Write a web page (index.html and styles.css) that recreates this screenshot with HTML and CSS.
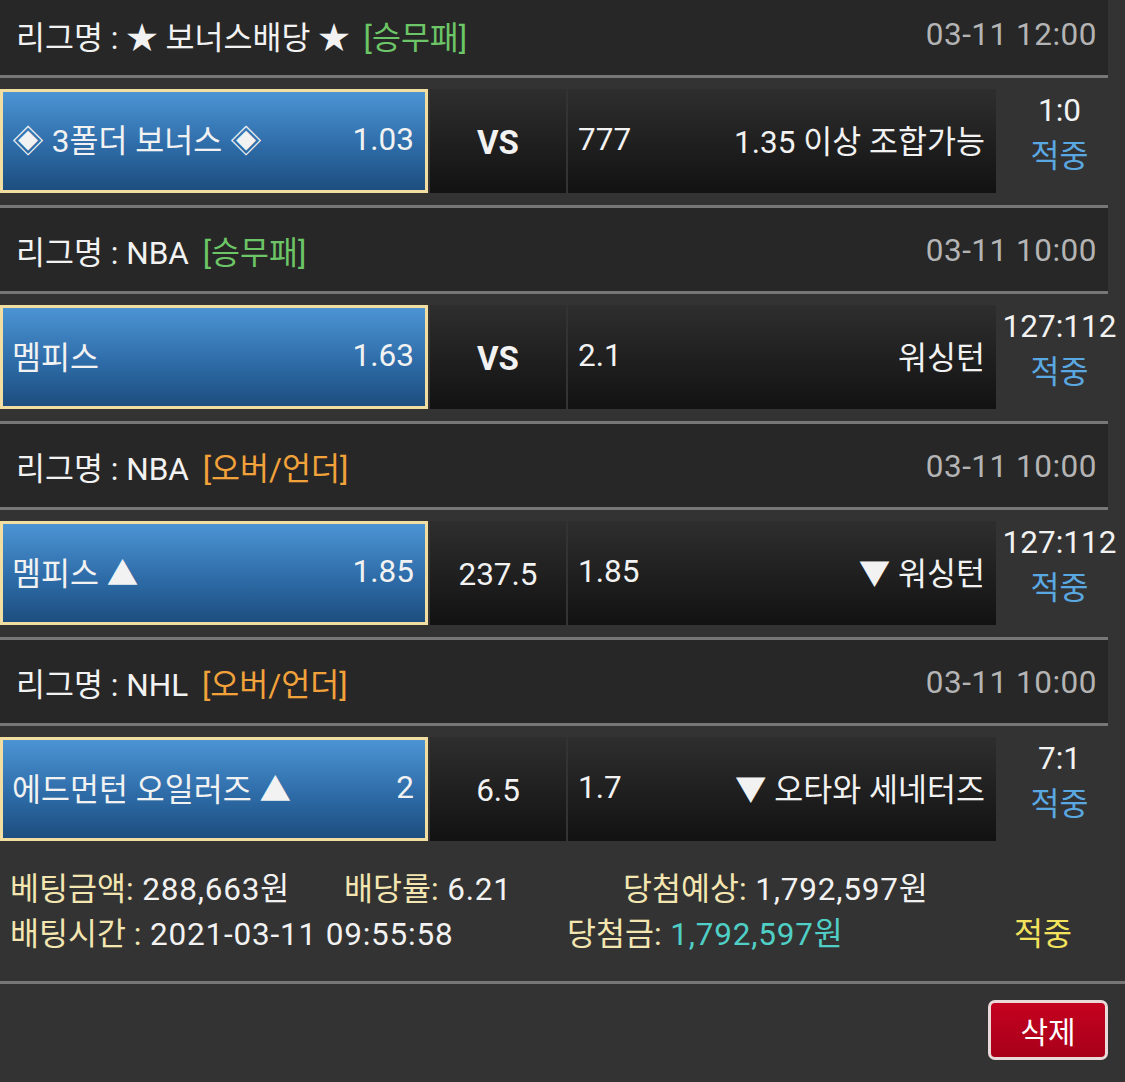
FILE: index.html
```html
<!DOCTYPE html>
<html lang="ko">
<head>
  <meta charset="UTF-8" />
  <meta name="viewport" content="width=device-width, initial-scale=1.0"/>
  <title>베팅내역</title>
  <link rel="stylesheet" href="styles.css">
</head>
<body>

  <div class="slip">

    <div class="league first">
      <span>리그명 : ★ 보너스배당 ★ <span class="tag win">[승무패]</span></span>
      <span class="date">03-11 12:00</span>
    </div>
    <div class="game">
      <div class="team picked"><span>◈ 3폴더 보너스 ◈</span><span>1.03</span></div>
      <div class="mid vs">VS</div>
      <div class="team"><span>777</span><span>1.35 이상 조합가능</span></div>
      <div class="result"><span>1:0</span><span class="hit">적중</span></div>
    </div>

    <div class="league">
      <span>리그명 : NBA <span class="tag win">[승무패]</span></span>
      <span class="date">03-11 10:00</span>
    </div>
    <div class="game">
      <div class="team picked"><span>멤피스</span><span>1.63</span></div>
      <div class="mid vs">VS</div>
      <div class="team"><span>2.1</span><span>워싱턴</span></div>
      <div class="result"><span>127:112</span><span class="hit">적중</span></div>
    </div>

    <div class="league">
      <span>리그명 : NBA <span class="tag ou">[오버/언더]</span></span>
      <span class="date">03-11 10:00</span>
    </div>
    <div class="game">
      <div class="team picked"><span>멤피스 ▲</span><span>1.85</span></div>
      <div class="mid">237.5</div>
      <div class="team"><span>1.85</span><span>▼ 워싱턴</span></div>
      <div class="result"><span>127:112</span><span class="hit">적중</span></div>
    </div>

    <div class="league">
      <span>리그명 : NHL <span class="tag ou">[오버/언더]</span></span>
      <span class="date">03-11 10:00</span>
    </div>
    <div class="game">
      <div class="team picked"><span>에드먼턴 오일러즈 ▲</span><span>2</span></div>
      <div class="mid">6.5</div>
      <div class="team"><span>1.7</span><span>▼ 오타와 세네터즈</span></div>
      <div class="result"><span>7:1</span><span class="hit">적중</span></div>
    </div>

    <div class="summary">
      <div class="line">
        <span class="col amount"><em>베팅금액:</em> 288,663원</span>
        <span class="col rate"><em>배당률:</em> 6.21</span>
        <span class="col"><em>당첨예상:</em> 1,792,597원</span>
      </div>
      <div class="line">
        <span class="col time"><em>배팅시간 :</em> 2021-03-11 09:55:58</span>
        <span class="col prize"><em>당첨금:</em> <b>1,792,597원</b></span>
        <span class="col status">적중</span>
      </div>
    </div>

    <div class="actions">
      <button class="delete-btn">삭제</button>
    </div>

  </div>

</body>
</html>
```

FILE: styles.css
```css
body {
  margin: 0;
  background: #333;
  color: #f2f2f2;
  font-family: Roboto, "Noto Sans CJK KR", sans-serif;
  font-size: 31.5px;
}

.slip {
  height: 1082px;
  overflow: hidden;
}

/* league header */
.league {
  height: 82px;
  margin-right: 17px;
  padding: 1px 11px 0 16px;
  background: #272727;
  border-top: 3px solid #777;
  border-bottom: 3px solid #777;
  display: flex;
  align-items: center;
  justify-content: space-between;
}

.league.first {
  height: 69px;
  border-top: 0;
  padding-top: 0;
  padding-bottom: 6px;
}

.tag {
  margin-left: 6px;
}

.tag.win { color: #6cc566; }
.tag.ou { color: #f2a23a; }

.date {
  color: #b4b4b4;
  letter-spacing: 0.5px;
}

/* game row */
.game {
  display: grid;
  grid-template-columns: 428px 136px 428px 1fr;
  column-gap: 2px;
  padding: 11px 0 12px;
  height: 104px;
}

.team, .mid {
  background: linear-gradient(#2e2e2e, #121212);
}

.team {
  display: flex;
  align-items: center;
  justify-content: space-between;
  padding: 0 11px 4px 10px;
}

.team.picked {
  background: linear-gradient(#4c94d4, #2e6ca8 55%, #1d4e7f);
  border: 3px solid #f1dea0;
  padding: 0 11px 4px 9px;
  box-sizing: border-box;
}

.mid {
  display: flex;
  align-items: center;
  justify-content: center;
  padding-top: 2px;
}

.mid.vs {
  font-weight: bold;
  font-size: 33px;
}

.result {
  display: flex;
  flex-direction: column;
  align-items: center;
  line-height: 46px;
  margin-top: -1px;
  padding-right: 4px;
}

.hit {
  color: #5aa8e2;
}

/* totals */
.summary {
  padding: 10px 10px 28px;
  border-bottom: 3px solid #777;
  letter-spacing: 0.8px;
}

.line {
  display: flex;
  height: 45px;
  align-items: center;
}

.summary em {
  font-style: normal;
  color: #f4e6b0;
  letter-spacing: 0;
}

.summary b {
  font-weight: normal;
  color: #4fcfc6;
}

.col.amount { width: 334px; }
.col.rate { width: 279px; }
.col.time { width: 557px; }
.col.prize { width: 447px; }
.col.status { color: #f3e35c; letter-spacing: 0; }

.actions {
  display: flex;
  justify-content: flex-end;
  padding: 16px 17px 0 0;
}

.delete-btn {
  width: 120px;
  height: 60px;
  font-family: inherit;
  font-size: 30px;
  color: #fff;
  background: linear-gradient(#c4021f, #a8001a);
  border: 3px solid #e9d9d9;
  border-radius: 7px;
  cursor: pointer;
}
```
